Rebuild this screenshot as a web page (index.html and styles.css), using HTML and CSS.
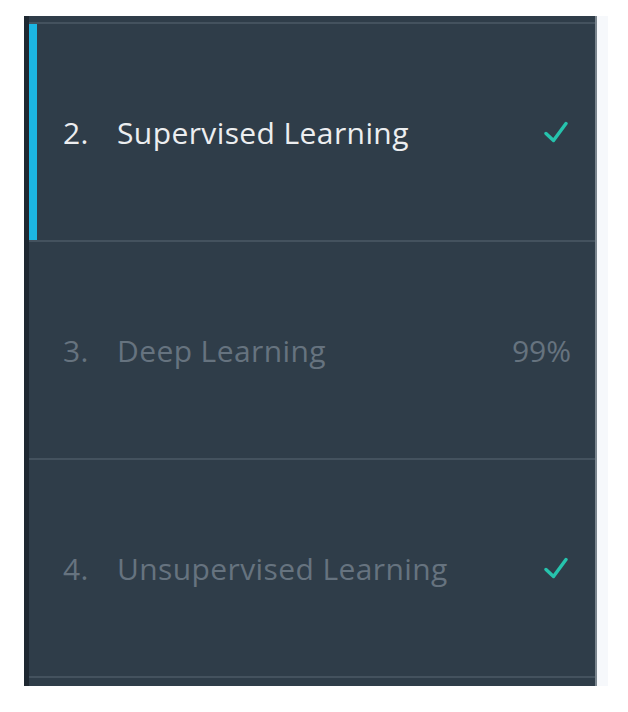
FILE: index.html
```html
<!DOCTYPE html>
<html>
<head>
<meta charset="utf-8">
<link rel="stylesheet" href="styles.css">
</head>
<body>
<div class="frame">
  <nav class="panel">
    <div class="row active">
      <span class="num">2.</span>
      <span class="title">Supervised Learning</span>
      <svg class="check" viewBox="0 0 24 22" width="24" height="22"><path d="M2 12.5 L9.5 19.5 L22 2.5" fill="none" stroke="#26c3ad" stroke-width="3.4" stroke-linecap="round" stroke-linejoin="round"/></svg>
    </div>
    <div class="row">
      <span class="num">3.</span>
      <span class="title">Deep Learning</span>
      <span class="pct">99%</span>
    </div>
    <div class="row">
      <span class="num">4.</span>
      <span class="title">Unsupervised Learning</span>
      <svg class="check" viewBox="0 0 24 22" width="24" height="22"><path d="M2 12.5 L9.5 19.5 L22 2.5" fill="none" stroke="#26c3ad" stroke-width="3.4" stroke-linecap="round" stroke-linejoin="round"/></svg>
    </div>
  </nav>
  <div class="edge"></div>
</div>
</body>
</html>
```

FILE: styles.css
```css
html, body {
  margin: 0;
  padding: 0;
  background: #ffffff;
}

.frame {
  display: flex;
  padding: 16px 0 0 24px;
  height: 670px;
}

.panel {
  width: 566px;
  background: #2f3d49;
  border-left: 5px solid #1e2831;
  padding-top: 6px;
  display: flex;
  flex-direction: column;
  font-family: "Open Sans", "Noto Sans", sans-serif;
}

.row {
  height: 216px;
  border-top: 2px solid #44525e;
  display: flex;
  align-items: center;
  padding: 0 27px 0 34px;
  color: #66737f;
  font-size: 30px;
  letter-spacing: 0.4px;
  flex: none;
}

.row:last-child {
  border-bottom: 2px solid #44525e;
}

.row.active {
  color: #eceef0;
  box-shadow: inset 8px 0 0 #1cb5e2;
}

.num {
  width: 54px;
  flex: none;
}

.title {
  flex: 1;
}

.check {
  display: block;
  margin-top: 0;
}

.pct {
  margin-right: -3px;
  letter-spacing: 0;
}

.edge {
  width: 11px;
  background: #f6f8fb;
  border-left: 2px solid #7b868f;
}
```
